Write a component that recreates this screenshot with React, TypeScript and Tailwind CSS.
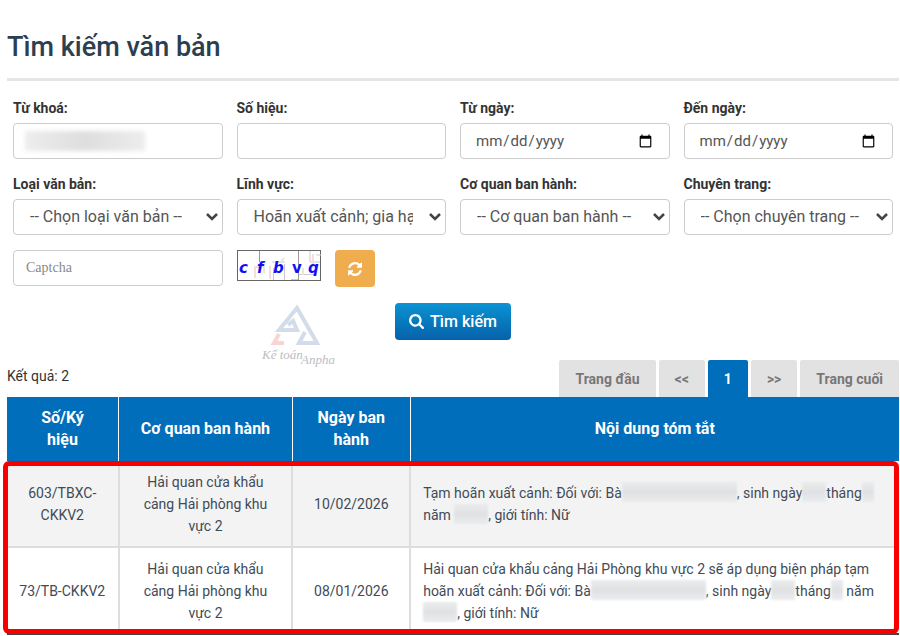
import React, { useState } from "react";
import type { ReactNode } from "react";

const inputClass =
  "block w-full h-9 rounded border border-[#ccc] bg-white px-[14px] text-[15px] text-[#555] outline-none focus:border-[#66afe9]";

const Field = ({ id, label, children }: { id: string; label: string; children: ReactNode }) => (
  <div>
    <label htmlFor={id} className="block text-sm leading-5 font-bold text-[#333] mb-[5px]">
      {label}
    </label>
    {children}
  </div>
);

const SelectField = ({ id, label, options }: { id: string; label: string; options: string[] }) => (
  <Field id={id} label={label}>
    <div className="relative">
      <select
        id={id}
        className="block w-full h-9 appearance-none rounded border border-[#ccc] bg-white pl-4 pr-8 text-base text-[#555] outline-none focus:border-[#66afe9]"
      >
        {options.map((option) => (
          <option key={option}>{option}</option>
        ))}
      </select>
      <svg
        viewBox="0 0 12 8"
        className="pointer-events-none absolute right-[5px] top-[14px] h-2 w-3 fill-none stroke-[#444] stroke-[2.5]"
        aria-hidden="true"
      >
        <path d="m1 1 5 5 5-5" />
      </svg>
    </div>
  </Field>
);

const RefreshIcon = () => (
  <svg viewBox="0 0 1536 1536" className="size-[14px] fill-white" aria-hidden="true">
    <path d="M1511 928q0 5-1 7-64 268-268 434.500T764 1536q-146 0-282.500-55T238 1324l-129 129q-19 19-45 19t-45-19-19-45V960q0-26 19-45t45-19h448q26 0 45 19t19 45-19 45l-137 137q71 66 161 102t187 36q134 0 250-65t186-179q11-17 53-117 8-23 30-23h192q13 0 22.500 9.500t9.500 22.500zm25-800v448q0 26-19 45t-45 19h-448q-26 0-45-19t-19-45 19-45l138-138Q969 256 768 256q-134 0-250 65T332 500q-11 17-53 117-8 23-30 23H50q-13 0-22.500-9.500T18 608v-7q65-268 270-434.500T768 0q146 0 284 55.500T1297 212l130-129q19-19 45-19t45 19 19 45z" />
  </svg>
);

const SearchIcon = () => (
  <svg viewBox="0 0 1664 1664" className="size-[15px] fill-white" aria-hidden="true">
    <path d="M1152 704q0-185-131.500-316.500T704 256 387.500 387.500 256 704t131.500 316.500T704 1152t316.500-131.500T1152 704zm512 832q0 52-38 90t-90 38q-54 0-90-38l-343-342q-179 124-399 124-143 0-273.500-55.500t-225-150-150-225T0 704t55.500-273.500 150-225 225-150T704 0t273.500 55.500 225 150 150 225T1408 704q0 220-124 399l343 343q37 37 37 90z" />
  </svg>
);

const CaptchaImage = () => (
  <svg viewBox="0 0 84 31" className="w-[84px] h-[31px]" role="img" aria-label="Captcha">
    <rect x=".5" y=".5" width="83" height="30" fill="#fff" stroke="#666" />
    <path d="M22.500 1v11M61.500 1v29" stroke="#999" fill="none" />
    <path d="M36.500 18v12M47.500 14v16M35 12h13M54 29.500h7M62 24.500h17M73 1v11h10M79 5h5" stroke="#cfc8d2" fill="none" />
    <path d="M18 28V17h9v6M33 29V16M44 12l3-4M76 4v14M66 18v7" stroke="#f0e2d6" strokeWidth="2" fill="none" />
    <g fill="#1010f5" fontFamily="DejaVu Sans, sans-serif" fontWeight="bold" fontSize="15">
      <text x="2" y="23" fontStyle="italic">c</text>
      <text x="20" y="23" fontStyle="italic">f</text>
      <text x="36" y="23" fontStyle="italic">b</text>
      <text x="55" y="23">v</text>
      <text x="71" y="23" fontStyle="italic">q</text>
    </g>
  </svg>
);

const Watermark = () => (
  <svg viewBox="0 0 82 72" className="w-[82px] h-[72px]" role="img" aria-label="Kế toán Anpha">
    <g fill="none" strokeWidth="4">
      <path d="m31 26 5-4 4 9H22L40 9l20 35H42l6-11" stroke="#d3dcea" />
      <path d="m22 35-5 9h10" stroke="#f8d5d2" />
    </g>
    <g fill="#bdbdc2" fontFamily="Liberation Serif, serif" fontStyle="italic" fontSize="13">
      <text x="5" y="60">Kế toán</text>
      <text x="44" y="65">Anpha</text>
    </g>
  </svg>
);

// Personal data is shown as a smudge
const Redacted = ({ className }: { className: string }) => (
  <span
    className={`inline-block h-5 align-top bg-linear-to-b from-[#ebecee] via-[#dfe1e4] to-[#ebecee] blur-[1px] ${className}`}
  />
);

const rows = [
  {
    code: "603/TBXC-CKKV2",
    agency: "Hải quan cửa khẩu cảng Hải phòng khu vực 2",
    date: "10/02/2026",
    summary: (
      <>
        Tạm hoãn xuất cảnh: Đối với: Bà
        <Redacted className="w-[115px]" />, sinh ngày
        <Redacted className="w-6" />
        tháng
        <Redacted className="w-3" /> năm <Redacted className="w-[34px]" />, giới tính: Nữ
      </>
    ),
  },
  {
    code: "73/TB-CKKV2",
    agency: "Hải quan cửa khẩu cảng Hải phòng khu vực 2",
    date: "08/01/2026",
    summary: (
      <>
        Hải quan cửa khẩu cảng Hải Phòng khu vực 2 sẽ áp dụng biện pháp tạm hoãn xuất cảnh: Đối với: Bà
        <Redacted className="w-[115px]" />, sinh ngày
        <Redacted className="w-6" />
        tháng
        <Redacted className="w-3" /> năm <Redacted className="w-[34px]" />, giới tính: Nữ
      </>
    ),
  },
];

const pages = ["Trang đầu", "<<", "1", ">>", "Trang cuối"];

const App = () => {
  const [current, setCurrent] = useState("1");

  return (
    <main className="bg-white pt-8 pl-[7px] pr-px font-[Roboto,sans-serif] text-[#333]">
      <h1 className="border-b-3 border-[#e5e5e8] pb-4 text-[27px] leading-[30px] font-medium text-[#2c3e50]">
        Tìm kiếm văn bản
      </h1>

      <form className="px-[6px] pt-[17px]" onSubmit={(e) => e.preventDefault()}>
        <div className="grid grid-cols-4 gap-x-[14px] gap-y-[15px]">
          <Field id="keyword" label="Từ khoá:">
            <div className="relative">
              <input id="keyword" type="text" className={inputClass} />
              <span className="absolute left-3 top-2 h-5 w-[120px] bg-linear-to-r from-[#ededed] via-[#dedede] to-[#ededed] blur-[2px]" />
            </div>
          </Field>
          <Field id="number" label="Số hiệu:">
            <input id="number" type="text" className={inputClass} />
          </Field>
          <Field id="from" label="Từ ngày:">
            <input id="from" type="date" className={inputClass} />
          </Field>
          <Field id="to" label="Đến ngày:">
            <input id="to" type="date" className={inputClass} />
          </Field>
          <SelectField id="type" label="Loại văn bản:" options={["-- Chọn loại văn bản --"]} />
          <SelectField id="field" label="Lĩnh vực:" options={["Hoãn xuất cảnh; gia hạn tạm hoãn xuất cảnh"]} />
          <SelectField id="agency" label="Cơ quan ban hành:" options={["-- Cơ quan ban hành --"]} />
          <SelectField id="site" label="Chuyên trang:" options={["-- Chọn chuyên trang --"]} />
          <input
            type="text"
            aria-label="Captcha"
            placeholder="Captcha"
            className="block w-full h-9 rounded border border-[#ccc] px-3 font-['Liberation_Serif',serif] text-sm placeholder:text-[#888] outline-none"
          />
          <div className="flex items-start gap-[14px]">
            <CaptchaImage />
            <button
              type="button"
              aria-label="Đổi mã captcha"
              className="flex h-[37px] w-10 items-center justify-center rounded bg-[#f0ad4e]"
            >
              <RefreshIcon />
            </button>
          </div>
        </div>

        <div className="relative mt-4 flex justify-center">
          <div className="absolute left-[244px] -top-1">
            <Watermark />
          </div>
          <button
            type="submit"
            className="flex h-[37px] items-center gap-[6px] rounded bg-linear-to-b from-[#0c93d3] to-[#0662ab] px-[14px] text-base leading-5 font-medium text-white"
          >
            <SearchIcon />
            Tìm kiếm
          </button>
        </div>
      </form>

      <div className="mt-5 flex items-start justify-between">
        <p className="pt-[6px] text-sm">Kết quả: 2</p>
        <nav className="flex gap-[3px] text-sm font-bold">
          {pages.map((page) => (
            <button
              key={page}
              type="button"
              onClick={() => setCurrent(page)}
              className={`h-[37px] rounded-t-xs px-4 ${
                current === page ? "bg-[#006eba] text-white" : "bg-[#e2e2e2] text-[#777]"
              }`}
            >
              {page}
            </button>
          ))}
        </nav>
      </div>

      <table className="w-full table-fixed border-collapse border-b-2 border-[#444] text-sm leading-[22px]">
        <colgroup>
          <col className="w-[12.5%]" />
          <col className="w-[19.5%]" />
          <col className="w-[13.2%]" />
          <col />
        </colgroup>
        <thead className="bg-[#006eba] text-base leading-[22px] font-bold text-white">
          <tr>
            {["Số/Ký hiệu", "Cơ quan ban hành", "Ngày ban hành", "Nội dung tóm tắt"].map((title) => (
              <th key={title} className="border-r border-white px-5 py-[10px] last:border-r-0">
                {title}
              </th>
            ))}
          </tr>
        </thead>
        <tbody className="relative text-center text-[#3f4b57] after:pointer-events-none after:absolute after:-left-1 after:right-0 after:inset-y-0 after:rounded-md after:border-5 after:border-[#f80000]">
          {rows.map((row) => (
            <tr key={row.code} className="border-b-2 border-[#ddd] odd:bg-[#f3f3f3] last:border-b-0">
              <td className="border-r-2 border-[#ddd] px-2 pt-[10px] pb-[9px]">{row.code}</td>
              <td className="border-r-2 border-[#ddd] px-4 pt-[10px] pb-[9px]">{row.agency}</td>
              <td className="border-r-2 border-[#ddd] px-2 pt-[10px] pb-[9px]">{row.date}</td>
              <td className="px-3 pt-[10px] pb-[9px] text-left">{row.summary}</td>
            </tr>
          ))}
        </tbody>
      </table>
    </main>
  );
};

export default App;
